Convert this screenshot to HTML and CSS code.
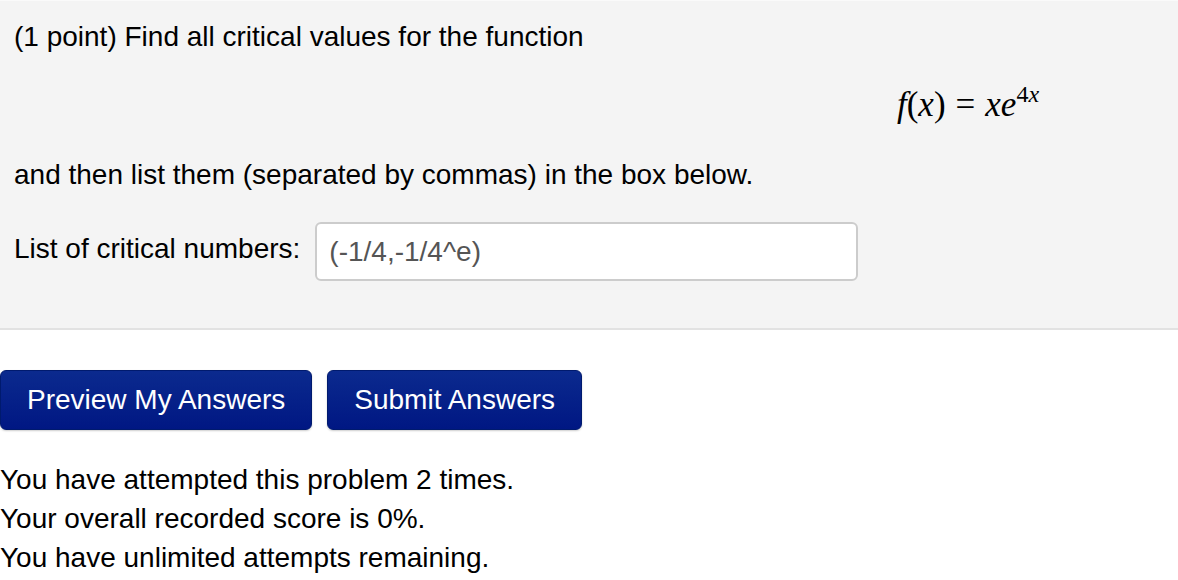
FILE: index.html
```html
<!DOCTYPE html>
<html lang="en">
<head>
    <meta charset="UTF-8">
    <meta name="viewport" content="width=device-width, initial-scale=1.0">
    <title>Problem</title>
    <link rel="stylesheet" href="styles.css">
</head>
<body>

<div class="page">
    <div class="problem">
        <p class="linha">(1 point) Find all critical values for the function</p>

        <div class="math">
            <i>f</i>(<i>x</i>)<span class="igual">=</span><i>xe</i><sup>4<i>x</i></sup>
        </div>

        <p class="linha">and then list them (separated by commas) in the box below.</p>

        <div class="resposta">
            <label for="resp">List of critical numbers:</label>
            <input type="text" id="resp" value="(-1/4,-1/4^e)">
        </div>
    </div>

    <div class="botoes">
        <button class="btn">Preview My Answers</button>
        <button class="btn">Submit Answers</button>
    </div>

    <div class="info">
        <p>You have attempted this problem 2 times.</p>
        <p>Your overall recorded score is 0%.</p>
        <p>You have unlimited attempts remaining.</p>
    </div>
</div>

</body>
</html>
```

FILE: styles.css
```css
body {
    margin: 0;
    padding: 0;
    background-color: #fff;
    color: #000;
    font-family: "Liberation Sans", Arial, sans-serif;
    font-size: 28px;
    overflow: hidden;
}
.page {
    width: 1936px;
}
.problem {
    background-color: #f4f4f4;
    border-top: 1px solid #fafafa;
    border-bottom: 2px solid #e2e2e2;
    padding: 19px 14px 47px;
}
.linha {
    margin: 0;
    line-height: 34px;
}
.math {
    text-align: center;
    font-family: "Liberation Serif", "Times New Roman", serif;
    font-size: 35px;
    line-height: 34px;
    margin: 34px 0 36px;
}
.math .igual {
    margin: 0 10px;
}
.math sup {
    font-size: 24px;
    vertical-align: 14px;
    line-height: 0;
}
.resposta {
    display: flex;
    align-items: center;
    gap: 15px;
    margin-top: 30px;
}
.resposta label {
    padding-bottom: 5px;
}
.resposta input {
    width: 543px;
    height: 59px;
    box-sizing: border-box;
    padding: 0 12px;
    font-family: "Liberation Sans", Arial, sans-serif;
    font-size: 28px;
    color: #555;
    background-color: #fff;
    border: 2px solid #ccc;
    border-radius: 6px;
}
.botoes {
    display: flex;
    gap: 15px;
    margin-top: 40px;
}
.btn {
    height: 60px;
    padding: 0 26px;
    font-family: "Liberation Sans", Arial, sans-serif;
    font-size: 28px;
    color: #fff;
    background: linear-gradient(#0b2a8e, #001783);
    border: 1px solid #001a6e;
    border-radius: 6px;
    box-shadow: 0 1px 2px rgba(0, 0, 0, 0.2);
}
.info {
    margin-top: 30px;
}
.info p {
    margin: 0;
    line-height: 39px;
}
```
